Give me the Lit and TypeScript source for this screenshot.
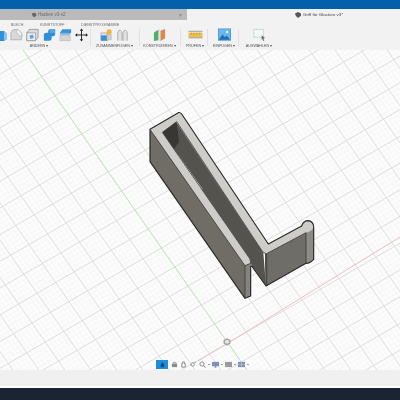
import { LitElement, html, css, svg } from "lit";
import { customElement } from "lit/decorators.js";

const O = { x: 228, y: 343 };
const G = 1.43, R = -0.58;

function lineThrough(px: number, py: number, m: number) {
  const x0 = -50, x1 = 450;
  return `M${x0} ${(py + (x0 - px) * m).toFixed(1)}L${x1} ${(py + (x1 - px) * m).toFixed(1)}`;
}
function grid() {
  let major = "", minor = "";
  for (let k = -160; k <= 160; k++) {
    const d = lineThrough(O.x + k * 3.7, O.y + k * 3.7 * R, G);
    if (k % 5 === 0) major += d; else minor += d;
  }
  for (let k = -140; k <= 140; k++) {
    const d = lineThrough(O.x + k * 2.66, O.y + k * 2.66 * G, R);
    if (k % 5 === 0) major += d; else minor += d;
  }
  return { major, minor };
}
const g = grid();

const icons = {
  round: svg`<path d="M1 13V5q1-4 6-4 6 1 7 7l-1 5z" fill="#d9d9d9" stroke="#9a9a9a" stroke-width=".7"/><path d="M8 1q5 1 6 7l-3 1q-1-3-4-4z" fill="#f0f0f0" stroke="#9a9a9a" stroke-width=".5"/>`,
  box: svg`<path d="M1 5l3-4h10v9l-3 4H1z" fill="#dcdcdc" stroke="#777" stroke-width=".7"/><path d="M1 5h10v9H1z" fill="#eee" stroke="#777" stroke-width=".6"/><path d="M4 8l4-1 1 4-4 1z" fill="#5aa7e0"/>`,
  blue1: svg`<path d="M1 7q0-2 3-2h2V3q0-2 2-2h6v6q0 2-2 2h-2v2q0 3-3 3H1z" fill="#2f8fd8"/><path d="M8 1h6v4H8z" fill="#56a9e6"/>`,
  blue2: svg`<path d="M1 5l3-4h10v4l-2 2H3z" fill="#3a93d8"/><path d="M1 5h11v2H1z" fill="#7ab7e4"/><path d="M1 8h12v6H1z" fill="#d4d4d4" stroke="#999" stroke-width=".4"/>`,
  move: svg`<path d="M7.5 2v11M2 7.5h11" stroke="#222" stroke-width="1.1" fill="none"/><path d="M7.5 0l2 2.5h-4zM7.5 15l2-2.5h-4zM0 7.5l2.5-2v4zM15 7.5l-2.5-2v4z" fill="#222"/>`,
  combine: svg`<path d="M1 5h8v9H1z" fill="#dcdcdc" stroke="#888" stroke-width=".5"/><path d="M1 8h7v6H1z" fill="#3d8fd2"/><circle cx="10.5" cy="4" r="3" fill="#f2b632"/><path d="M8 7h5v6H8z" fill="#cfcfcf" stroke="#999" stroke-width=".4"/>`,
  joint: svg`<path d="M2 14V5q1-4 3-3t2 4v8M8 14V5q1-4 3-3t2 4v8" fill="#e2e2e2" stroke="#a9a9a9" stroke-width="1"/>`,
  plane: svg`<path d="M1 5l5-3v11l-5 1z" fill="#4caf6a"/><path d="M6 2l1-1v13l-1-1z" fill="#dcdcdc"/><path d="M8 3l5-2v10l-5 3z" fill="#d98a52"/><path d="M1 5l5-3" stroke="#999" stroke-width=".5"/>`,
  measure: svg`<rect x="0" y="5" width="15" height="5" fill="#ecc04b"/><rect x="0" y="3" width="15" height="1" fill="#999"/><rect x="0" y="10" width="15" height="1" fill="#999"/><path d="M3 5v2M6 5v2M9 5v2M12 5v2" stroke="#8a6a10" stroke-width=".5"/>`,
  picture: svg`<rect x="0" y="0" width="15" height="14" fill="#3b95dc"/><rect x=".8" y=".8" width="13.4" height="12.4" fill="#6db5ea"/><path d="M1 13l4-6 3 3 2-2 4 5z" fill="#1f6fb5"/><circle cx="10.5" cy="4" r="1.5" fill="#e8f4fd"/>`,
  select: svg`<rect x="1" y="1" width="11" height="9" fill="#f4f8f4" stroke="#7fb79b" stroke-width=".7" stroke-dasharray="1.4 .8"/><path d="M10 8l4 3-2 .5 1 2.5-1 .5-1-2.5-1 1z" fill="#666"/>`,
};

const ic = (s: unknown, w = 13) => html`<svg class="ic" style="width:${w}px" viewBox="0 0 15 15">${s}</svg>`;

const nav = (s: unknown) => html`<svg class="nv" viewBox="0 0 8 8">${s}</svg>`;

@customElement("app-root")
export class AppRoot extends LitElement {
  static styles = css`
    :host { display: block; width: 400px; height: 400px; overflow: hidden; font-family: "Liberation Sans", Arial, sans-serif; }
    .page { width: 400px; height: 400px; display: flex; flex-direction: column; background: #f2f2f2; filter: blur(0.35px); }
    .blue { height: 9px; background: #0560ac; flex: none; }
    .tabs { height: 11px; flex: none; display: flex; background: #f2f2f2; }
    .tab { width: 187px; background: #bababa; display: flex; align-items: center; padding-left: 31px; box-sizing: border-box; gap: 1px; font-size: 4.5px; color: #6b6b6b; }
    .tab .x { margin-left: auto; margin-right: 5px; font-size: 5px; }
    .doc { flex: 1; display: flex; align-items: center; gap: 2px; padding-left: 108px; font-size: 4.4px; color: #444; }
    .cube { width: 6px; height: 6px; }
    .ribbon { height: 30px; flex: none; background: #f2f2f2; display: flex; flex-direction: column; overflow: hidden; }
    .heads { height: 8px; flex: none; display: flex; align-items: center; font-size: 3.7px; color: #6c6c6c; padding-left: 11px; padding-top: 2px; box-sizing: border-box; }
    .heads span:nth-child(1) { width: 29px; }
    .heads span:nth-child(2) { width: 41px; }
    .groups { flex: 1; display: flex; }
    .group { display: flex; flex-direction: column; align-items: center; box-sizing: border-box; position: relative; }
    .group + .group::before { content: ""; position: absolute; left: 0; top: 1px; bottom: 4px; width: 1px; background: #e1e1e1; }
    .row { display: flex; gap: 3.2px; height: 15px; flex: none; align-items: flex-start; }
    .ic { height: 14px; flex: none; overflow: visible; display: block; }
    .lab { font-size: 3.7px; color: #555; line-height: 5px; margin-top: 1px; white-space: nowrap; }
    .g1 { width: 90px; padding-right: 12px; }
    .g1 .row { align-self: flex-start; }
    .g2 { width: 49px; }
    .g2 .row { gap: 3.5px; }
    .g3 { width: 41px; }
    .g4 { width: 27px; padding-left: 3px; }
    .g5 { width: 31px; padding-left: 3px; }
    .g6 { width: 42px; }
    .canvas { flex: 1; position: relative; background: #fcfcfc; overflow: hidden; }
    .scene { display: block; width: 400px; height: 320px; }
    .nav { position: absolute; left: 156px; bottom: 1px; display: flex; align-items: center; gap: 2.5px; height: 9px; }
    .on { background: #1c8fdc; width: 12px; height: 9px; display: flex; align-items: center; justify-content: center; }
    .nv { width: 7px; height: 7px; display: block; }
    .caret { width: 0; height: 0; border-left: 1px solid transparent; border-right: 1px solid transparent; border-top: 1.5px solid #444; margin-left: -1px; }
    .status { height: 16px; flex: none; background: #f0f0f0; }
    .white { height: 2px; flex: none; background: #fff; }
    .dark { height: 12px; flex: none; background: #1a2432; }
  `;

  render() {
    return html`<div class="page">
      <div class="blue"></div>
      <div class="tabs">
        <div class="tab">
          <svg class="cube" viewBox="0 0 8 8"><path d="M1 2l3-1 3 1v3l-3 2-2-2z" fill="#666"/></svg>
          <span>Hacken v3-v2</span><span class="x">×</span>
        </div>
        <div class="doc">
          <svg class="cube" viewBox="0 0 8 8"><path d="M0 2l4-2 4 2v3l-4 3-3-3z" fill="#555"/></svg>
          <span>Griff für Glastüre v3*</span>
        </div>
      </div>
      <div class="ribbon">
        <div class="heads"><span>BLECH</span><span>KUNSTSTOFF</span><span>DIENSTPROGRAMME</span></div>
        <div class="groups">
          <div class="group g1">
            <div class="row">
              <svg class="ic" style="width:7px" viewBox="0 0 7 14"><path d="M0 3h4l3 3v5l-3 2H0z" fill="#2f8fd8"/><path d="M4 3l3 3v5l-3 2z" fill="#8cc4ee"/></svg>
              ${ic(icons.round)}${ic(icons.box)}${ic(icons.blue1)}${ic(icons.blue2)}${ic(icons.move)}
            </div>
            <div class="lab">ÄNDERN ▾</div>
          </div>
          <div class="group g2">
            <div class="row">${ic(icons.combine)}${ic(icons.joint)}</div>
            <div class="lab">ZUSAMMENFÜGEN ▾</div>
          </div>
          <div class="group g3">
            <div class="row">${ic(icons.plane, 14)}</div>
            <div class="lab">KONSTRUIEREN ▾</div>
          </div>
          <div class="group g4">
            <div class="row">${ic(icons.measure, 15)}</div>
            <div class="lab">PRÜFEN ▾</div>
          </div>
          <div class="group g5">
            <div class="row">${ic(icons.picture)}</div>
            <div class="lab">EINFÜGEN ▾</div>
          </div>
          <div class="group g6">
            <div class="row">${ic(icons.select)}</div>
            <div class="lab">AUSWÄHLEN ▾</div>
          </div>
        </div>
      </div>
      <div class="canvas">
        <svg class="scene" viewBox="0 50 400 320">
          <path d="${g.minor}" stroke="#f1f1f1" stroke-width=".5" fill="none"/>
          <path d="${g.major}" stroke="#d6d6d6" stroke-width=".8" fill="none"/>
          <path d="${lineThrough(O.x, O.y, G)}" stroke="#bfeab9" stroke-width="1" fill="none"/>
          <path d="M198 361L${O.x} ${O.y}L400 237" stroke="#f2bcc0" stroke-width="1" fill="none"/>
          <g transform="translate(227 342)">
            <path d="M-3.5 -2l3.5-1.8 3.5 1.8v3.6l-3.5 2.2-3.5-2.2z" fill="#a4a4a4"/>
            <path d="M-2 -1.2l2-1 2 1v2l-2 1-2-1z" fill="#e6e6e6"/>
          </g>
          <g transform="translate(130 100) scale(.33333)" stroke-linejoin="round">
            <path d="M60 88V185L345 595L362 588V490L350 490Z" fill="#6f6d66"/>
            <path d="M345 497V595L362 588V490Z" fill="#85837e"/>
            <path d="M97 97L140 65L400 458L408 557L365 498L360 477Z" fill="#55534e"/>
            <path d="M97 97L140 65L147 125L130 150Z" fill="#383733"/>
            <path d="M145 165L218 268L210 264L141 168Z" fill="#f2f2f2"/>
            <path d="M405 458L528 398V490L408 558Z" fill="#6f6d67"/>
            <path d="M405 458L412 462V556L408 558Z" fill="#55534f"/>
            <path d="M528 395L551 380V478Q540 490 528 490Z" fill="#8d8b86"/>
            <path d="M60 88L145 38Q150 36 155 42L415 432L515 378Q520 362 535 362Q551 365 551 382Q548 394 528 398L408 462L398 455L138 65L97 97L360 477L362 490L345 497Z" fill="#cfcdca"/>
            <path d="M60 88L145 38Q150 36 155 42L415 432L515 378Q520 362 535 362Q551 365 551 382V478Q540 490 528 490L408 558L365 498L362 500V588L345 595L60 185Z" fill="none" stroke="#2b2a27" stroke-width="3.5"/>
            <path d="M60 88L345 497L362 490L360 477L97 97L140 65L398 455L408 462L528 398" fill="none" stroke="#3c3b37" stroke-width="2.5"/>
            <path d="M345 497V595M408 462V558M528 398V490" fill="none" stroke="#3c3b37" stroke-width="2.5"/>
          </g>
        </svg>
        <div class="nav">
          <div class="on">${nav(svg`<path d="M2 7V4l2-3 2 3v3z" fill="#0e4f83"/>`)}</div>
          ${nav(svg`<path d="M1 3h6v4H1z" fill="#8a8a8a"/><path d="M2 1h4v2H2z" fill="#b0b0b0"/>`)}
          ${nav(svg`<path d="M2 7V3h1V1h2v2h1v4z" fill="none" stroke="#666" stroke-width=".8"/>`)}
          ${nav(svg`<circle cx="3" cy="4" r="2" fill="none" stroke="#777" stroke-width=".8"/><path d="M5 2l2-1" stroke="#777" stroke-width=".8"/>`)}
          ${nav(svg`<circle cx="3.4" cy="3.4" r="2.4" fill="none" stroke="#777" stroke-width=".9"/><path d="M5 5l2.5 2.5" stroke="#777" stroke-width="1"/>`)}
          <span class="caret"></span>
          ${nav(svg`<rect x="0" y="1" width="8" height="5" fill="#7b93b8"/><rect x="3" y="6" width="2" height="1.5" fill="#777"/>`)}
          <span class="caret"></span>
          ${nav(svg`<rect x="0" y="1" width="8" height="6" fill="#9b9b9b"/>`)}
          <span class="caret"></span>
          ${nav(svg`<rect x="0" y="1" width="8" height="6" fill="#7f93b4"/><path d="M0 4h8M4 1v6" stroke="#cfd8e6" stroke-width=".5"/>`)}
          <span class="caret"></span>
        </div>
      </div>
      <div class="status"></div>
      <div class="white"></div>
      <div class="dark"></div>
    </div>`;
  }
}
